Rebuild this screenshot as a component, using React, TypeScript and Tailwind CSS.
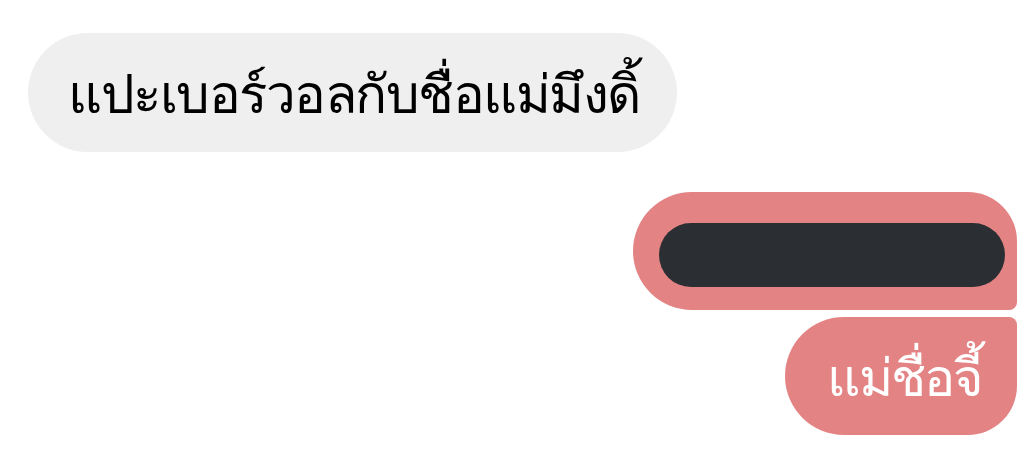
const font = { fontFamily: '"Noto Sans", "Liberation Sans", sans-serif' };

export default function App() {
  return (
    <div className="h-[456px] w-[1024px] overflow-hidden bg-white" style={font}>
      <div className="flex flex-col pl-[28px] pr-[7px] pt-[33px]">
        <div className="flex h-[119px] w-[649px] items-center rounded-full bg-[#efefef] pl-[40px]">
          <span className="text-[53px] leading-none tracking-[-1.5px] text-black">แปะเบอร์วอลกับชื่อแม่มึงดิ้</span>
        </div>
        <div className="mt-[40px] flex flex-col items-end gap-[7px]">
          <div className="flex h-[118px] w-[384px] rounded-tl-[60px] rounded-tr-[50px] rounded-br-[8px] rounded-bl-[60px] bg-[#e38384] pb-[23px] pl-[26px] pr-[12px] pt-[31px]">
            <div className="h-[64px] w-full rounded-full bg-[#2b2f33]" />
          </div>
          <div className="flex h-[118px] w-[232px] items-center justify-center rounded-tl-[60px] rounded-tr-[8px] rounded-br-[50px] rounded-bl-[60px] bg-[#e38384] pl-[6px]">
            <span className="text-[52px] leading-none tracking-[-2px] text-white">แม่ชื่อจี้</span>
          </div>
        </div>
      </div>
    </div>
  );
}
